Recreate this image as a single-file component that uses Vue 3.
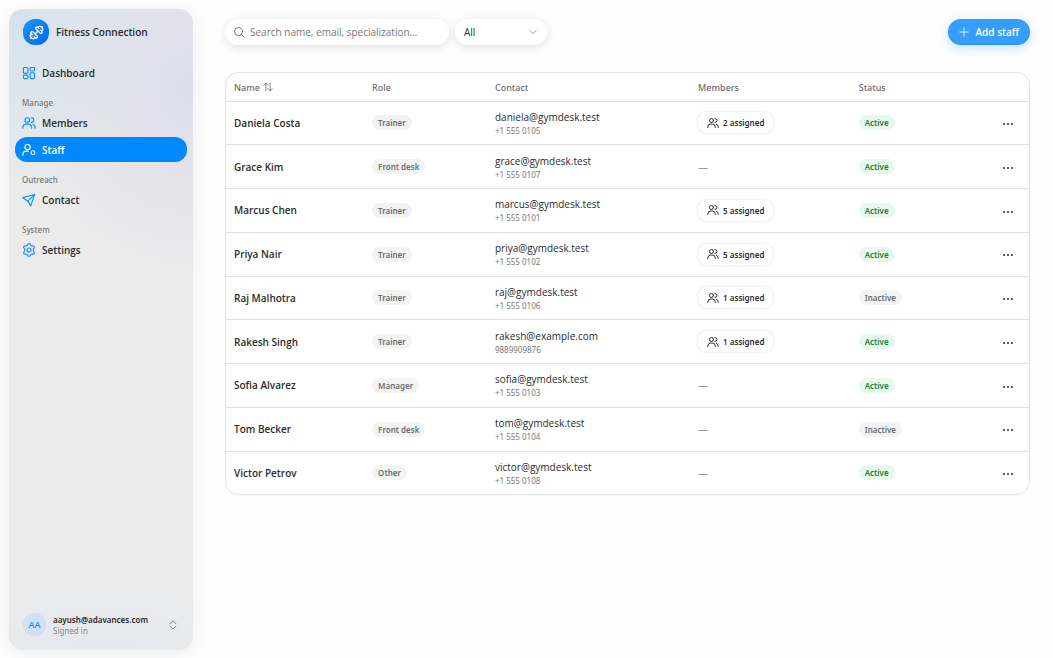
<script setup>
import { h } from 'vue'

const paths = {
  dumbbell: [
    'M17.596 12.768a2 2 0 1 0 2.829-2.829l-1.768-1.767a2 2 0 0 0 2.828-2.829l-2.828-2.828a2 2 0 0 0-2.829 2.828l-1.767-1.768a2 2 0 1 0-2.829 2.829z',
    'm2.500 21.500 1.400-1.400',
    'm20.100 3.900 1.400-1.400',
    'M5.343 21.485a2 2 0 1 0 2.829-2.828l1.767 1.768a2 2 0 1 0 2.829-2.829l-6.364-6.364a2 2 0 1 0-2.829 2.829l1.768 1.767a2 2 0 0 0-2.828 2.829z',
    'm9.600 14.400 4.800-4.800'
  ],
  dashboard: [
    'M4 2.500h4.500A1.500 1.500 0 0 1 10 4v7a1.500 1.500 0 0 1-1.500 1.500H4A1.500 1.500 0 0 1 2.500 11V4A1.500 1.500 0 0 1 4 2.500Z',
    'M15.500 2.500H20A1.500 1.500 0 0 1 21.500 4v3A1.500 1.500 0 0 1 20 8.500h-4.500A1.500 1.500 0 0 1 14 7V4a1.500 1.500 0 0 1 1.500-1.500Z',
    'M15.500 11.500H20a1.500 1.500 0 0 1 1.500 1.500v7a1.500 1.500 0 0 1-1.500 1.500h-4.500A1.500 1.500 0 0 1 14 20v-7a1.500 1.500 0 0 1 1.500-1.500Z',
    'M4 15.500h4.500A1.500 1.500 0 0 1 10 17v3a1.500 1.500 0 0 1-1.500 1.500H4A1.500 1.500 0 0 1 2.500 20v-3A1.500 1.500 0 0 1 4 15.500Z'
  ],
  users: ['M13 7a4 4 0 1 1-8 0 4 4 0 0 1 8 0Z', 'M1.500 21v-1a6 6 0 0 1 6-6h3a6 6 0 0 1 6 6v1', 'M16 3a4 4 0 0 1 0 8', 'M18.500 14.200a6 6 0 0 1 4 5.800v1'],
  staff: ['M14 7a4.500 4.500 0 1 1-9 0 4.500 4.500 0 0 1 9 0Z', 'M1.500 21v-1a6 6 0 0 1 6-6h3.500', 'M22 16.500a3.200 3.200 0 1 1-6.400 0 3.200 3.200 0 0 1 6.400 0Z'],
  send: ['M21.500 2.500 1.500 8l8.500 6 5 8Z', 'm21.500 2.500-11.500 11.500'],
  settings: [
    'M15.500 12a3.500 3.500 0 1 1-7 0 3.500 3.500 0 0 1 7 0Z',
    'M9.600 3a2.500 2.500 0 0 1 4.800 0c.5 1.500 1.900 2.200 3.400 1.900a2.500 2.500 0 0 1 2.700 4c-1.300 1.600-1.300 4.600 0 6.200a2.500 2.500 0 0 1-2.700 4c-1.500-.3-2.900.4-3.400 1.900a2.500 2.500 0 0 1-4.800 0c-.5-1.500-1.900-2.200-3.400-1.900a2.500 2.500 0 0 1-2.700-4c1.300-1.600 1.300-4.600 0-6.200a2.500 2.500 0 0 1 2.700-4C7.700 5.200 9.100 4.500 9.600 3Z'
  ],
  search: ['M19 11a8 8 0 1 1-16 0 8 8 0 0 1 16 0Z', 'm17 17 5 5'],
  chevron: ['m4 8 8 8 8-8'],
  plus: ['M12 2v20M2 12h20'],
  sort: ['M7 21V3M2 8l5-5 5 5', 'M17 3v18M12 16l5 5 5-5'],
  updown: ['m5 9 7-7 7 7', 'm5 15 7 7 7-7'],
  dots: ['M4 12h.01M12 12h.01M20 12h.01']
}

const Icon = (props) =>
  h(
    'svg',
    { viewBox: '0 0 24 24', class: 'icon', 'aria-hidden': 'true' },
    paths[props.name].map((d) => h('path', { d }))
  )
Icon.props = ['name']

const groups = [
  { title: '', items: [{ label: 'Dashboard', icon: 'dashboard' }] },
  { title: 'Manage', items: [{ label: 'Members', icon: 'users' }, { label: 'Staff', icon: 'staff', active: true }] },
  { title: 'Outreach', items: [{ label: 'Contact', icon: 'send' }] },
  { title: 'System', items: [{ label: 'Settings', icon: 'settings' }] }
]

const staff = [
  { name: 'Daniela Costa', role: 'Trainer', email: 'daniela@gymdesk.test', phone: '+1 555 0105', members: 2, active: true },
  { name: 'Grace Kim', role: 'Front desk', email: 'grace@gymdesk.test', phone: '+1 555 0107', members: 0, active: true },
  { name: 'Marcus Chen', role: 'Trainer', email: 'marcus@gymdesk.test', phone: '+1 555 0101', members: 5, active: true },
  { name: 'Priya Nair', role: 'Trainer', email: 'priya@gymdesk.test', phone: '+1 555 0102', members: 5, active: true },
  { name: 'Raj Malhotra', role: 'Trainer', email: 'raj@gymdesk.test', phone: '+1 555 0106', members: 1, active: false },
  { name: 'Rakesh Singh', role: 'Trainer', email: 'rakesh@example.com', phone: '9889909876', members: 1, active: true },
  { name: 'Sofia Alvarez', role: 'Manager', email: 'sofia@gymdesk.test', phone: '+1 555 0103', members: 0, active: true },
  { name: 'Tom Becker', role: 'Front desk', email: 'tom@gymdesk.test', phone: '+1 555 0104', members: 0, active: false },
  { name: 'Victor Petrov', role: 'Other', email: 'victor@gymdesk.test', phone: '+1 555 0108', members: 0, active: true }
]
</script>

<template>
  <div class="app">
    <aside class="sidebar">
      <div class="brand">
        <span class="logo"><Icon name="dumbbell" /></span>
        <span>Fitness Connection</span>
      </div>
      <nav>
        <section v-for="g in groups" :key="g.title" class="group">
          <h2 v-if="g.title">{{ g.title }}</h2>
          <a v-for="i in g.items" :key="i.label" href="#" :class="{ active: i.active }">
            <Icon :name="i.icon" />{{ i.label }}
          </a>
        </section>
      </nav>
      <button class="account" type="button">
        <span class="avatar">AA</span>
        <span class="who"><strong>aayush@adavances.com</strong><small>Signed in</small></span>
        <Icon name="updown" />
      </button>
    </aside>

    <main>
      <div class="toolbar">
        <label class="search">
          <Icon name="search" />
          <input type="search" placeholder="Search name, email, specialization..." aria-label="Search staff" />
        </label>
        <label class="filter">
          <select aria-label="Role filter"><option>All</option></select>
          <Icon name="chevron" />
        </label>
        <button class="add" type="button"><Icon name="plus" />Add staff</button>
      </div>

      <div class="card">
        <table>
          <colgroup>
            <col class="c-name" /><col class="c-role" /><col class="c-contact" /><col class="c-members" /><col class="c-status" /><col />
          </colgroup>
          <thead>
            <tr>
              <th><button class="sort" type="button">Name<Icon name="sort" /></button></th>
              <th>Role</th>
              <th>Contact</th>
              <th>Members</th>
              <th>Status</th>
              <th></th>
            </tr>
          </thead>
          <tbody>
            <tr v-for="s in staff" :key="s.name">
              <td class="name">{{ s.name }}</td>
              <td><span class="badge">{{ s.role }}</span></td>
              <td><div class="email">{{ s.email }}</div><div class="phone">{{ s.phone }}</div></td>
              <td>
                <button v-if="s.members" class="assigned" type="button"><Icon name="users" />{{ s.members }} assigned</button>
                <span v-else class="none">—</span>
              </td>
              <td><span class="badge" :class="{ on: s.active }">{{ s.active ? 'Active' : 'Inactive' }}</span></td>
              <td class="actions"><button type="button" :aria-label="'Actions for ' + s.name"><Icon name="dots" /></button></td>
            </tr>
          </tbody>
        </table>
      </div>
    </main>
  </div>
</template>

<style>
body {
  background: #fefefe;
}
</style>

<style scoped>
.app {
  box-sizing: border-box;
  display: flex;
  gap: 32px;
  min-height: 100vh;
  padding: 9px 23px 8px 9px;
  font-family: "Open Sans", "Noto Sans", sans-serif;
  font-size: 10px;
  color: #2b2b2d;
}
.app * {
  box-sizing: border-box;
}
button,
input,
select {
  margin: 0;
  padding: 0;
  border: 0;
  background: none;
  color: inherit;
  font: inherit;
}
.icon {
  flex: none;
  width: 12px;
  height: 12px;
  fill: none;
  stroke: currentColor;
  stroke-width: 2;
  stroke-linecap: round;
  stroke-linejoin: round;
}
.sidebar {
  display: flex;
  flex: none;
  flex-direction: column;
  width: 184px;
  padding: 10px 6px 14px;
  border-radius: 14px;
  background:
    radial-gradient(ellipse 150px 190px at 0 0, #d3e2ee 0%, rgba(211, 226, 238, 0) 100%),
    radial-gradient(ellipse 184px 190px at 100% 80px, #dddcec 0%, rgba(221, 220, 236, 0) 100%),
    radial-gradient(ellipse 180px 70px at 50% 100%, #e4e8ed 0%, rgba(228, 232, 237, 0) 100%),
    #ebebeb;
  box-shadow: 0 4px 24px rgba(0, 0, 0, 0.07);
}
.brand {
  display: flex;
  align-items: center;
  gap: 7px;
  padding: 0 8px;
  font-size: 10px;
  font-weight: 600;
}
.logo {
  display: grid;
  place-items: center;
  width: 26px;
  height: 26px;
  border-radius: 12px;
  background: linear-gradient(135deg, #2094ff, #0066ee);
  color: #fff;
}
.logo .icon {
  width: 15px;
  height: 15px;
}
nav {
  flex: 1;
  padding-top: 16px;
}
.group {
  margin-bottom: 12px;
}
h2 {
  margin: 0;
  padding: 0 7px 2px;
  font-family: "Noto Sans", "Open Sans", sans-serif;
  font-size: 8px;
  font-weight: 500;
  line-height: 12px;
  color: #77777b;
}
nav a {
  display: flex;
  align-items: center;
  gap: 6px;
  height: 24px;
  margin-bottom: 2px;
  padding: 0 7px;
  border-radius: 12px;
  color: inherit;
  font-size: 10px;
  font-weight: 600;
  text-decoration: none;
}
nav a + a {
  height: 25px;
}
nav a .icon {
  width: 14px;
  height: 14px;
  color: #1a8cff;
}
nav a.active {
  background: #0088ff;
  color: #fff;
}
nav a.active .icon {
  color: #fff;
}
.account {
  display: flex;
  align-items: center;
  gap: 7px;
  padding: 0 9px 0 8px;
  text-align: left;
}
.avatar {
  display: grid;
  flex: none;
  place-items: center;
  width: 23px;
  height: 23px;
  border-radius: 50%;
  background: #cfe1f2;
  color: #1a8cff;
  font-size: 9px;
  font-weight: 600;
}
.who {
  flex: 1;
  min-width: 0;
  font-family: "Noto Sans", "Open Sans", sans-serif;
  line-height: 11px;
}
.who strong,
.who small {
  display: block;
  font-size: 8px;
  font-weight: 600;
}
.who small {
  color: #8a8a8e;
  font-weight: 400;
}
.account .icon {
  width: 10px;
  height: 10px;
  color: #66666a;
}
main {
  flex: 1;
  min-width: 0;
  padding-top: 10px;
}
.toolbar {
  display: flex;
  gap: 6px;
  margin-bottom: 27px;
}
.search,
.filter {
  display: flex;
  align-items: center;
  height: 26px;
  border-radius: 13px;
  background: #fff;
  box-shadow: 0 2px 10px rgba(0, 0, 0, 0.12);
}
.search {
  gap: 5px;
  flex: 0 1 224px;
  padding: 0 8px;
  color: #77777b;
}
.search input {
  flex: 1;
  min-width: 0;
  outline: 0;
}
.search input::placeholder {
  color: #77777b;
}
.filter {
  width: 92px;
  padding: 0 9px;
}
.filter select {
  flex: 1;
  appearance: none;
  outline: 0;
}
.filter .icon {
  width: 10px;
  height: 10px;
  color: #88888c;
}
.add {
  display: flex;
  align-items: center;
  gap: 6px;
  height: 26px;
  margin-left: auto;
  padding: 0 11px;
  border-radius: 13px;
  background: #369eff;
  box-shadow: 0 3px 12px rgba(54, 158, 255, 0.3), inset 0 -1px 2px rgba(0, 90, 200, 0.25);
  color: #fff;
  font-weight: 600;
}
.add .icon {
  width: 10px;
  height: 10px;
}
.card {
  overflow: hidden;
  border: 1px solid #e3e3e3;
  border-radius: 13px;
  background: #fff;
}
table {
  width: 100%;
  height: 421px;
  border-collapse: collapse;
  table-layout: fixed;
}
.c-name {
  width: 17.2%;
}
.c-role {
  width: 15.3%;
}
.c-contact {
  width: 25.3%;
}
.c-members {
  width: 20%;
}
.c-status {
  width: 15%;
}
th,
td {
  padding: 0 8px;
  text-align: left;
}
th {
  height: 28px;
  padding-top: 1px;
  color: #6c6c70;
  font-family: "Noto Sans", "Open Sans", sans-serif;
  font-size: 9px;
  font-weight: 500;
}
tbody td {
  border-top: 1px solid #e0e0e0;
}
.sort {
  display: flex;
  align-items: center;
  gap: 3px;
}
.sort .icon {
  width: 10px;
  height: 10px;
}
.name {
  font-weight: 600;
}
.email {
  line-height: 15px;
}
.phone {
  color: #77777b;
  font-family: "Noto Sans", "Open Sans", sans-serif;
  font-size: 8px;
  line-height: 11px;
}
.badge {
  display: inline-block;
  padding: 0 6px;
  border-radius: 8px;
  background: #f3f3f3;
  color: #6c6c70;
  font-family: "Noto Sans", "Open Sans", sans-serif;
  font-size: 8px;
  font-weight: 600;
  line-height: 15px;
}
.badge.on {
  background: #e7f8ec;
  color: #15803d;
}
.assigned {
  display: inline-flex;
  align-items: center;
  gap: 4px;
  height: 21px;
  padding: 0 9px;
  border-radius: 8px;
  background: #fff;
  box-shadow: 0 0 2px rgba(0, 0, 0, 0.18);
  font-family: "Noto Sans", "Open Sans", sans-serif;
  font-size: 8px;
  font-weight: 600;
}
.none {
  color: #99999d;
}
.actions {
  padding-right: 15px;
  text-align: right;
}
.actions button {
  display: inline-flex;
  vertical-align: middle;
}
.actions .icon {
  stroke-width: 4;
}
</style>
